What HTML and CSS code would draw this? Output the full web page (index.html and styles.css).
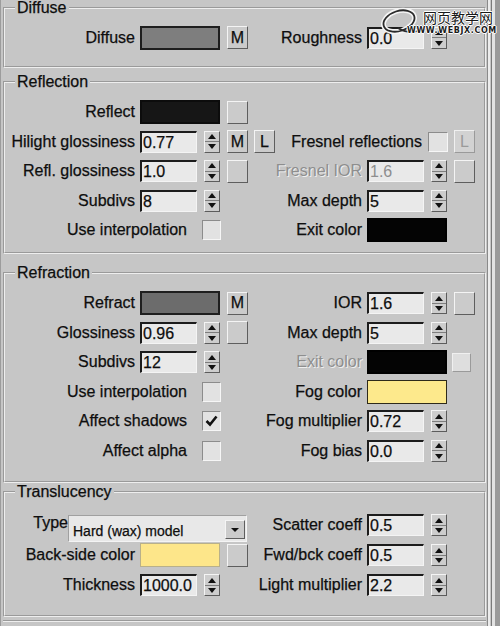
FILE: index.html
```html
<!DOCTYPE html>
<html lang="en">
<head>
    <meta charset="UTF-8">
    <title>Material parameters</title>
    <link rel="stylesheet" href="styles.css">
</head>
<body>

<div class="screen">
    <div class="panel">

        <fieldset class="group group-diffuse">
            <legend>Diffuse</legend>
            <div class="cols">
                <div class="col col-left">
                    <div class="row">
                        <span class="label">Diffuse</span>
                        <span class="swatch swatch-grey"></span>
                        <span class="btn">M</span>
                    </div>
                </div>
                <div class="col col-right">
                    <div class="row">
                        <span class="label">Roughness</span>
                        <span class="field">0.0</span>
                        <span class="spin"><i class="up"></i><i class="down"></i></span>
                    </div>
                </div>
            </div>
        </fieldset>

        <fieldset class="group group-reflection">
            <legend>Reflection</legend>
            <div class="cols">
                <div class="col col-left">
                    <div class="row">
                        <span class="label">Reflect</span>
                        <span class="swatch swatch-black"></span>
                        <span class="btn"></span>
                    </div>
                    <div class="row">
                        <span class="label">Hilight glossiness</span>
                        <span class="field">0.77</span>
                        <span class="spin"><i class="up"></i><i class="down"></i></span>
                        <span class="btn">M</span>
                        <span class="btn btn-l">L</span>
                    </div>
                    <div class="row">
                        <span class="label">Refl. glossiness</span>
                        <span class="field">1.0</span>
                        <span class="spin"><i class="up"></i><i class="down"></i></span>
                        <span class="btn"></span>
                    </div>
                    <div class="row">
                        <span class="label">Subdivs</span>
                        <span class="field">8</span>
                        <span class="spin"><i class="up"></i><i class="down"></i></span>
                    </div>
                    <div class="row row-check">
                        <span class="label">Use interpolation</span>
                        <span class="check"></span>
                    </div>
                </div>
                <div class="col col-right">
                    <div class="row"></div>
                    <div class="row row-check">
                        <span class="label">Fresnel reflections</span>
                        <span class="check"></span>
                        <span class="btn btn-l btn-off">L</span>
                    </div>
                    <div class="row">
                        <span class="label label-off">Fresnel IOR</span>
                        <span class="field field-off">1.6</span>
                        <span class="spin"><i class="up"></i><i class="down"></i></span>
                        <span class="btn"></span>
                    </div>
                    <div class="row">
                        <span class="label">Max depth</span>
                        <span class="field">5</span>
                        <span class="spin"><i class="up"></i><i class="down"></i></span>
                    </div>
                    <div class="row">
                        <span class="label">Exit color</span>
                        <span class="swatch swatch-exit"></span>
                    </div>
                </div>
            </div>
        </fieldset>

        <fieldset class="group group-refraction">
            <legend>Refraction</legend>
            <div class="cols">
                <div class="col col-left">
                    <div class="row">
                        <span class="label">Refract</span>
                        <span class="swatch swatch-dark"></span>
                        <span class="btn">M</span>
                    </div>
                    <div class="row">
                        <span class="label">Glossiness</span>
                        <span class="field">0.96</span>
                        <span class="spin"><i class="up"></i><i class="down"></i></span>
                        <span class="btn"></span>
                    </div>
                    <div class="row">
                        <span class="label">Subdivs</span>
                        <span class="field">12</span>
                        <span class="spin"><i class="up"></i><i class="down"></i></span>
                    </div>
                    <div class="row row-check">
                        <span class="label">Use interpolation</span>
                        <span class="check"></span>
                    </div>
                    <div class="row row-check">
                        <span class="label">Affect shadows</span>
                        <span class="check">
                            <svg width="13" height="12" viewBox="0 0 13 12"><path d="M1.5 6 L5 9.5 L11.5 1.5" fill="none" stroke="#111" stroke-width="2.6"/></svg>
                        </span>
                    </div>
                    <div class="row row-check">
                        <span class="label">Affect alpha</span>
                        <span class="check"></span>
                    </div>
                </div>
                <div class="col col-right">
                    <div class="row">
                        <span class="label">IOR</span>
                        <span class="field">1.6</span>
                        <span class="spin"><i class="up"></i><i class="down"></i></span>
                        <span class="btn"></span>
                    </div>
                    <div class="row">
                        <span class="label">Max depth</span>
                        <span class="field">5</span>
                        <span class="spin"><i class="up"></i><i class="down"></i></span>
                    </div>
                    <div class="row">
                        <span class="label label-off">Exit color</span>
                        <span class="swatch swatch-exit"></span>
                        <span class="btn btn-small btn-off"></span>
                    </div>
                    <div class="row">
                        <span class="label">Fog color</span>
                        <span class="swatch swatch-fog"></span>
                    </div>
                    <div class="row">
                        <span class="label">Fog multiplier</span>
                        <span class="field">0.72</span>
                        <span class="spin"><i class="up"></i><i class="down"></i></span>
                    </div>
                    <div class="row">
                        <span class="label">Fog bias</span>
                        <span class="field">0.0</span>
                        <span class="spin"><i class="up"></i><i class="down"></i></span>
                    </div>
                </div>
            </div>
        </fieldset>

        <fieldset class="group group-translucency">
            <legend>Translucency</legend>
            <div class="cols">
                <div class="col col-left">
                    <div class="row row-type">
                        <span class="label">Type</span>
                        <span class="select">
                            <span class="select-text">Hard (wax) model</span>
                            <span class="select-arrow"></span>
                        </span>
                    </div>
                    <div class="row">
                        <span class="label">Back-side color</span>
                        <span class="swatch swatch-back"></span>
                        <span class="btn"></span>
                    </div>
                    <div class="row">
                        <span class="label">Thickness</span>
                        <span class="field">1000.0</span>
                        <span class="spin"><i class="up"></i><i class="down"></i></span>
                    </div>
                </div>
                <div class="col col-right">
                    <div class="row">
                        <span class="label">Scatter coeff</span>
                        <span class="field">0.5</span>
                        <span class="spin"><i class="up"></i><i class="down"></i></span>
                    </div>
                    <div class="row">
                        <span class="label">Fwd/bck coeff</span>
                        <span class="field">0.5</span>
                        <span class="spin"><i class="up"></i><i class="down"></i></span>
                    </div>
                    <div class="row">
                        <span class="label">Light multiplier</span>
                        <span class="field">2.2</span>
                        <span class="spin"><i class="up"></i><i class="down"></i></span>
                    </div>
                </div>
            </div>
        </fieldset>

        <div class="panel-foot"></div>
    </div>
    <div class="edge"></div>

    <div class="watermark">
        <svg class="wm-logo" width="52" height="32" viewBox="0 0 52 32">
            <ellipse cx="19" cy="15" rx="16" ry="10" transform="rotate(-18 19 15)" fill="none" stroke="#f4f4f4" stroke-width="5"/>
            <ellipse cx="19" cy="15" rx="16" ry="10" transform="rotate(-18 19 15)" fill="none" stroke="#2a2a2a" stroke-width="1.8"/>
            <path d="M18 22 Q30 30 50 21" fill="none" stroke="#2a2a2a" stroke-width="1.8"/>
        </svg>
        <span class="wm-cn">网页教学网</span>
        <span class="wm-url">WWW.WEBJX.COM</span>
    </div>
</div>

</body>
</html>
```

FILE: styles.css
```css
* {
    box-sizing: border-box;
}

body {
    margin: 0;
    background-color: #c6c6c6;
    color: #0e0e0e;
    font-family: "Liberation Sans", Arial, sans-serif;
    font-size: 16px;
    -webkit-text-stroke: 0.25px #0e0e0e;
}

.screen {
    position: relative;
    display: flex;
    width: 500px;
    height: 626px;
    overflow: hidden;
}

.panel {
    width: 487px;
    border-left: 1px solid #9c9c9c;
    padding: 0 1px 0 2px;
}

.edge {
    width: 13px;
    background: linear-gradient(to right,
        #8a8a8a 0 1px, #ececec 1px 3px, #c6c6c6 3px 4px,
        #7a7a7a 4px 5px, #e2e2e2 5px 8px, #9a9a9a 8px 13px);
}

/* group boxes */

.group {
    margin: 5px 0 0;
    padding: 0;
    min-width: 0;
    border: 2px groove #eeeeee;
}

.group legend {
    margin-left: 10px;
    padding: 0 2px;
    line-height: 18px;
}

.group-diffuse {
    margin-top: -1px;
    padding: 6px 0 13px;
}

.group-reflection {
    padding: 6.75px 0 7px;
}

.group-refraction {
    margin-top: 10.5px;
    padding: 6.25px 0 15.75px;
}

.group-translucency {
    margin-top: 0;
    padding: 9px 0 14.5px;
}

.cols {
    display: flex;
}

.col-left {
    width: 271px;
}

.col-right {
    flex: 1;
}

.row {
    display: flex;
    align-items: center;
    height: 29.5px;
}

.group-translucency .row {
    height: 30px;
}

.label {
    display: flex;
    justify-content: flex-end;
    flex-shrink: 0;
    width: 135px;
    padding-right: 5px;
    white-space: nowrap;
}

.col-right .label {
    width: 91px;
}

.row-check .label {
    width: 197px;
    padding-right: 15px;
}

.col-right .row-check .label {
    width: 152px;
    padding-right: 6px;
}

.label-off {
    color: #8e8e8e;
    -webkit-text-stroke: 0;
    text-shadow: 1px 1px 0 #f0f0f0;
}

/* controls */

.field {
    width: 57px;
    height: 22px;
    padding-left: 1px;
    background-color: #e9e9e9;
    border-style: solid;
    border-width: 2px 1px 1px 2px;
    border-color: #1c1c1c #f4f4f4 #f4f4f4 #1c1c1c;
    line-height: 19px;
    overflow: hidden;
}

.field-off {
    color: #8e8e8e;
    -webkit-text-stroke: 0;
}

.spin {
    display: flex;
    flex-direction: column;
    width: 16px;
    height: 22px;
    margin-left: 7px;
    background-color: #cdcdcd;
    border: 1px solid;
    border-color: #f4f4f4 #5c5c5c #5c5c5c #f4f4f4;
}

.spin i {
    flex: 1;
    display: flex;
    align-items: center;
    justify-content: center;
}

.spin i + i {
    border-top: 1px solid #7e7e7e;
}

.spin i::after {
    content: "";
    border-left: 4px solid transparent;
    border-right: 4px solid transparent;
}

.spin .up::after {
    border-bottom: 5px solid #111111;
}

.spin .down::after {
    border-top: 5px solid #111111;
}

.btn {
    display: flex;
    align-items: center;
    justify-content: center;
    width: 21px;
    height: 23px;
    margin-left: 7px;
    background-color: #cbcbcb;
    border: 1px solid;
    border-color: #f4f4f4 #5e5e5e #5e5e5e #f4f4f4;
}

.btn-l {
    margin-left: 6px;
}

.btn-off {
    color: #9a9a9a;
    -webkit-text-stroke: 0;
    background-color: #d2d2d2;
    border-color: #f0f0f0 #9a9a9a #9a9a9a #f0f0f0;
}

.btn-small {
    width: 19px;
    height: 19px;
    margin-left: 5px;
    background-color: #dedede;
}

.swatch {
    width: 80px;
    height: 24px;
    border: 2px solid #1e1e1e;
}

.swatch-grey {
    background-color: #7e7e7e;
}

.swatch-black {
    background-color: #161616;
    border-color: #0c0c0c;
}

.swatch-dark {
    background-color: #6c6c6c;
}

.swatch-exit {
    background-color: #040404;
    border-color: #000000;
}

.swatch-fog {
    background-color: #fde98c;
    border: 1px solid #2e2a1a;
}

.swatch-back {
    background-color: #fde68a;
    border: 1px solid #b8b08a;
}

.check {
    display: flex;
    align-items: center;
    justify-content: center;
    width: 19px;
    height: 20px;
    background-color: #e2e2e2;
    border: 1px solid;
    border-color: #8c8c8c #f6f6f6 #f6f6f6 #8c8c8c;
}

.col-right .check {
    width: 20px;
}

/* translucency type dropdown */

.row-type .label {
    width: 63px;
    padding-right: 0;
    padding-bottom: 4px;
}

.select {
    display: flex;
    align-items: center;
    width: 179px;
    height: 27px;
    margin-top: 6px;
    padding: 0 1px 0 4px;
    background-color: #e8e8e8;
    border: 1px solid;
    border-color: #a0a0a0 #f4f4f4 #f4f4f4 #a0a0a0;
    font-size: 14px;
}

.select-text {
    flex: 1;
    padding-top: 6px;
}

.select-arrow {
    display: flex;
    align-items: center;
    justify-content: center;
    width: 20px;
    height: 19px;
    margin-top: 3px;
    background-color: #cbcbcb;
    border: 1px solid;
    border-color: #f4f4f4 #5e5e5e #5e5e5e #f4f4f4;
}

.select-arrow::after {
    content: "";
    border-left: 4px solid transparent;
    border-right: 4px solid transparent;
    border-top: 4px solid #111111;
}

.panel-foot {
    margin-top: 3px;
    border-top: 2px groove #eeeeee;
}

/* site watermark over the corner */

.watermark {
    position: absolute;
    top: 4px;
    left: 380px;
    width: 115px;
    height: 34px;
    -webkit-text-stroke: 0;
}

.wm-logo {
    position: absolute;
    top: 2px;
    left: 0;
}

.wm-cn {
    position: absolute;
    top: 4px;
    left: 43px;
    font-family: "Noto Sans CJK SC", sans-serif;
    font-size: 14px;
    line-height: 18px;
    color: #1a1a1a;
    text-shadow: 1px 0 0 #fff, -1px 0 0 #fff, 0 1px 0 #fff, 0 -1px 0 #fff;
}

.wm-url {
    position: absolute;
    top: 22px;
    left: 27px;
    font-family: "DejaVu Sans", sans-serif;
    font-size: 8px;
    font-weight: bold;
    letter-spacing: 0.6px;
    line-height: 10px;
    color: #1a1a1a;
    text-shadow: 1px 0 0 #fff, -1px 0 0 #fff, 0 1px 0 #fff, 0 -1px 0 #fff;
}
```
